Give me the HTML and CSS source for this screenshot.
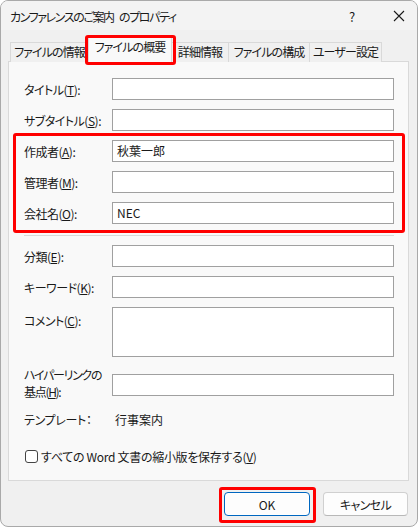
FILE: index.html
```html
<!DOCTYPE html>
<html lang="ja">
<head>
<meta charset="utf-8">
<title>プロパティ</title>
<link rel="stylesheet" href="styles.css">
</head>
<body>
<div class="window">
  <div class="titlebar">
    <span class="title">カンファレンスのご案内 のプロパティ</span>
    <span class="help">?</span>
    <span class="close"><svg width="12" height="12" viewBox="0 0 12 12"><path d="M1 1 L11 11 M11 1 L1 11" stroke="#1a1a1a" stroke-width="1.1" fill="none"/></svg></span>
  </div>
  <div class="body">
    <div class="tabs">
      <div class="tab t1">ファイルの情報</div>
      <div class="tab t2 active">ファイルの概要</div>
      <div class="tab t3">詳細情報</div>
      <div class="tab t4">ファイルの構成</div>
      <div class="tab t5">ユーザー設定</div>
    </div>
    <div class="panel">
      <div class="grid">
        <label class="lbl">タイトル(<u>T</u>):</label><div class="field"></div>
        <label class="lbl">サブタイトル(<u>S</u>):</label><div class="field"></div>
        <label class="lbl">作成者(<u>A</u>):</label><div class="field">秋葉一郎</div>
        <label class="lbl">管理者(<u>M</u>):</label><div class="field"></div>
        <label class="lbl">会社名(<u>O</u>):</label><div class="field">NEC</div>
      </div>
      <div class="sep"></div>
      <div class="grid grid2">
        <label class="lbl">分類(<u>E</u>):</label><div class="field"></div>
        <label class="lbl">キーワード(<u>K</u>):</label><div class="field"></div>
        <label class="lbl top">コメント(<u>C</u>):</label><div class="field tall"></div>
        <label class="lbl two">ハイパーリンクの<br>基点(<u>H</u>):</label><div class="field hl"></div>
        <span class="lbl tmpl">テンプレート：</span><span class="value">行事案内</span>
      </div>
      <div class="check">
        <span class="box"></span>
        <span class="check-text">すべての Word 文書の縮小版を保存する(<u>V</u>)</span>
      </div>
    </div>
    <div class="footer">
      <button class="btn ok">OK</button>
      <button class="btn cancel">キャンセル</button>
    </div>
  </div>
  <div class="mark mark-tab"></div>
  <div class="mark mark-fields"></div>
  <div class="mark mark-ok"></div>
</div>
</body>
</html>
```

FILE: styles.css
```css
* { box-sizing: border-box; }
html, body { margin: 0; padding: 0; background: #ffffff; }
body {
  font-family: "Noto Sans CJK JP", "Noto Sans", sans-serif;
  font-size: 12px;
  color: #1a1a1a;
  font-feature-settings: "palt";
}
.window {
  position: relative;
  width: 418px;
  height: 527px;
  border: 1px solid #a9a9a9;
  border-radius: 8px;
  background: #f0f0f0;
  overflow: hidden;
}
.titlebar {
  display: flex;
  align-items: center;
  height: 29px;
  padding-left: 9px;
  background: #f3f3f3;
}
.title { flex: 1; font-size: 12px; letter-spacing: -1.4px; word-spacing: 4px; padding-top: 2px; }
.help { width: 14px; margin-right: 30px; font-size: 13px; padding-top: 2px; }
.close { width: 12px; margin-right: 12px; display: flex; }
.body { padding: 0 8px 0 7px; }
.tabs {
  display: flex;
  align-items: flex-end;
  height: 32px;
  padding-left: 2px;
  margin-bottom: -1px;
  position: relative;
  z-index: 1;
}
.tab {
  height: 20px;
  line-height: 18px;
  padding: 0;
  border: 1px solid #d9d9d9;
  border-bottom: none;
  background: #f0f0f0;
  text-align: center;
  white-space: nowrap;
  margin-right: -1px;
  letter-spacing: -0.9px;
}
.t1 { width: 79px; }
.t2 { width: 84px; }
.t3 { width: 58px; }
.t4 { width: 82px; }
.t5 { width: 73px; }
.tab.active {
  height: 27px;
  line-height: 22px;
  background: #f9f9f9;
  position: relative;
  z-index: 2;
}
.panel {
  height: 420px;
  border: 1px solid #d9d9d9;
  background: #f9f9f9;
  padding: 16px 13px 15px 15px;
  display: flex;
  flex-direction: column;
}
.grid {
  display: grid;
  grid-template-columns: 88px 282px;
  row-gap: 9px;
  align-items: center;
}
.lbl { white-space: nowrap; letter-spacing: -0.5px; }
.lbl.top { align-self: start; padding-top: 5px; }
.lbl.two { line-height: 17px; letter-spacing: -1.3px; }
.lbl.tmpl { letter-spacing: -0.3px; }
.field {
  height: 22px;
  border: 1px solid #a0a0a0;
  background: #ffffff;
  padding: 0 4px;
  line-height: 20px;
}
.field.tall { height: 50px; }
.grid2 .hl { margin-top: 3px; }
.grid2 .tmpl, .grid2 .value { margin-top: 2px; }
.value { padding-left: 3px; }
.sep {
  height: 1px;
  background: #d9d9d9;
  margin: 11px 0 9px;
  width: 370px;
}
.check {
  margin-top: auto;
  display: flex;
  align-items: center;
  gap: 3px;
  padding-left: 1px;
}
.check-text { letter-spacing: -0.3px; }
.box {
  width: 13px;
  height: 13px;
  border: 1px solid #444;
  border-radius: 3px;
  background: #fff;
}
.footer {
  display: flex;
  justify-content: flex-end;
  gap: 13px;
  padding-top: 11px;
  padding-right: 1px;
}
.btn {
  font-family: inherit;
  font-size: 12px;
  font-feature-settings: "palt";
  color: #1a1a1a;
  width: 85px;
  height: 24px;
  border: 1px solid #d0d0d0;
  border-bottom-color: #b8b8b8;
  border-radius: 4px;
  background: #fdfdfd;
  padding: 0;
}
.btn.cancel { letter-spacing: -0.6px; }
.btn.ok {
  width: 86px;
  border: 1px solid #0067c0;
  box-shadow: inset 0 0 0 1px #ffffff;
}
.mark {
  position: absolute;
  border: 3px solid #ff0000;
  border-radius: 3px;
  z-index: 5;
}
.mark-tab { left: 84px; top: 34px; width: 91px; height: 30px; }
.mark-fields { left: 12px; top: 132px; width: 392px; height: 100px; }
.mark-ok { left: 218px; top: 486px; width: 97px; height: 36px; }
```
